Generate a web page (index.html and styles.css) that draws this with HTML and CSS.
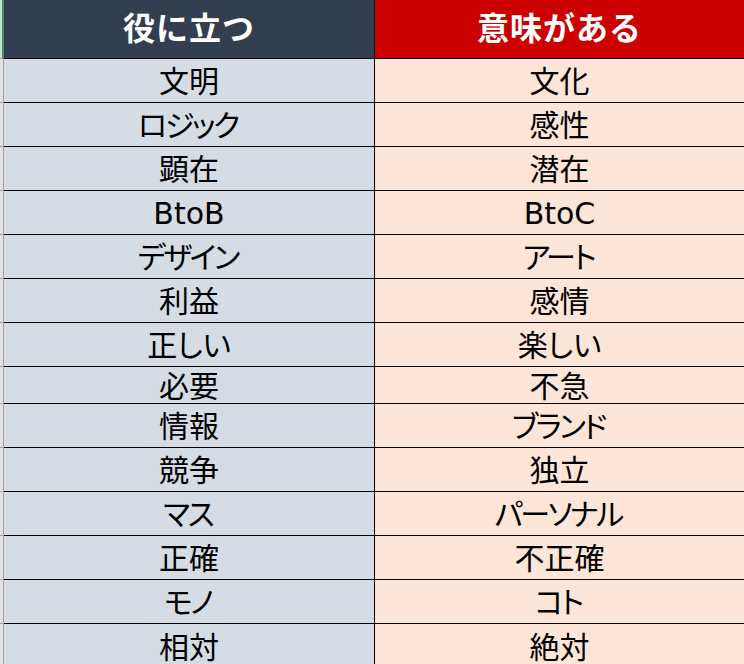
FILE: index.html
```html
<!DOCTYPE html>
<html lang="ja">
<head>
<meta charset="utf-8">
<link rel="stylesheet" href="styles.css">
</head>
<body>
<div class="sheet">
  <div class="row head">
    <div class="gut"></div>
    <div class="cell l">役に立つ</div>
    <div class="cell r">意味がある</div>
  </div>
  <div class="row"><div class="gut"></div><div class="cell l">文明</div><div class="cell r">文化</div></div>
  <div class="row"><div class="gut"></div><div class="cell l kana">ロジック</div><div class="cell r">感性</div></div>
  <div class="row"><div class="gut"></div><div class="cell l">顕在</div><div class="cell r">潜在</div></div>
  <div class="row"><div class="gut"></div><div class="cell l">BtoB</div><div class="cell r">BtoC</div></div>
  <div class="row"><div class="gut"></div><div class="cell l kana">デザイン</div><div class="cell r kana">アート</div></div>
  <div class="row"><div class="gut"></div><div class="cell l">利益</div><div class="cell r">感情</div></div>
  <div class="row"><div class="gut"></div><div class="cell l">正しい</div><div class="cell r">楽しい</div></div>
  <div class="row short"><div class="gut"></div><div class="cell l">必要</div><div class="cell r">不急</div></div>
  <div class="row"><div class="gut"></div><div class="cell l">情報</div><div class="cell r kana">ブランド</div></div>
  <div class="row"><div class="gut"></div><div class="cell l">競争</div><div class="cell r">独立</div></div>
  <div class="row"><div class="gut"></div><div class="cell l kana">マス</div><div class="cell r kana">パーソナル</div></div>
  <div class="row"><div class="gut"></div><div class="cell l">正確</div><div class="cell r">不正確</div></div>
  <div class="row"><div class="gut"></div><div class="cell l kana">モノ</div><div class="cell r kana">コト</div></div>
  <div class="row last"><div class="gut"></div><div class="cell l">相対</div><div class="cell r">絶対</div></div>
</div>
</body>
</html>
```
FILE: styles.css
```css
html, body {
  margin: 0;
  padding: 0;
  background: #ffffff;
  overflow: hidden;
}
.sheet {
  width: 744px;
  height: 664px;
  overflow: hidden;
  font-family: "DejaVu Sans", "Noto Sans CJK JP", sans-serif;
  color: #000;
}
.row {
  display: flex;
  height: 44px;
}
.row.short {
  height: 37px;
}
.row.last {
  height: 41px;
}
.row.last .cell {
  border-bottom: none;
  padding-top: 6px;
}
.row.head {
  height: 59px;
}
.gut {
  width: 3px;
  flex: none;
  background: #e2e2e2;
  border-right: 1px solid #a3a3a3;
  border-bottom: 1px solid #a3a3a3;
}
.head .gut {
  width: 2px;
  border-right: 2px solid #3f9360;
  background: #cfe0d3;
  border-bottom: 1px solid #a3a3a3;
}
.cell {
  display: flex;
  align-items: center;
  justify-content: center;
  font-size: 30px;
  line-height: 1;
  border-bottom: 1px solid #000;
  box-sizing: border-box;
  padding-top: 3px;
  font-feature-settings: "palt";
}
.cell.kana {
  letter-spacing: -2.4px;
  text-indent: -2.4px;
}
.cell.l {
  width: 371px;
  flex: none;
  background: #d6dce4;
  border-right: 1px solid #000;
}
.cell.r {
  flex: 1;
  background: #fde5d8;
}
.head .cell {
  font-family: "Noto Sans CJK JP", sans-serif;
  font-size: 32px;
  font-weight: bold;
  color: #fff;
  padding-top: 0;
  padding-bottom: 7px;
  font-feature-settings: normal;
  letter-spacing: 1px;
}
.head .cell.l {
  background: #333f50;
}
.head .cell.r {
  background: #cc0000;
}
```
